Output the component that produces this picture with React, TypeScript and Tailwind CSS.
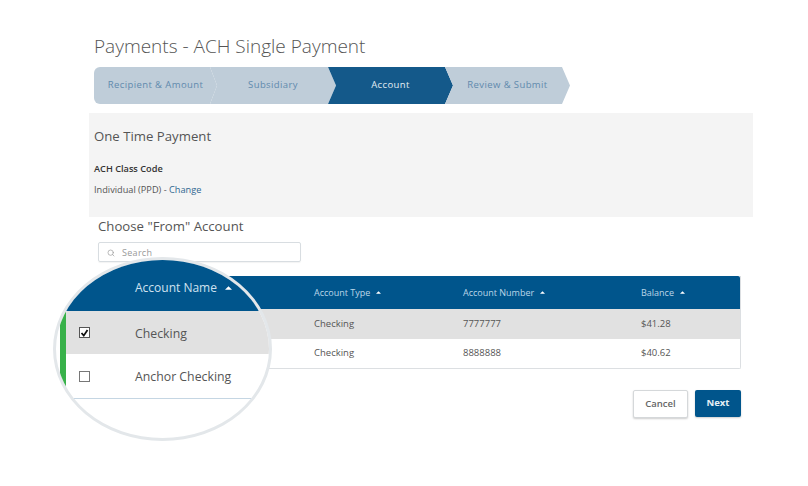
import { useState } from "react"
import { Search } from "lucide-react"

const steps = [
  { label: "Recipient & Amount", width: "w-[123px]", gap: "", clip: "[clip-path:polygon(0_0,116px_0,100%_50%,116px_100%,0_100%)] rounded-l-[6px]" },
  { label: "Subsidiary", width: "w-[126px]", gap: "-ml-[7px]", clip: "[clip-path:polygon(0_0,118px_0,100%_50%,118px_100%,0_100%,7px_50%)]" },
  { label: "Account", width: "w-[125px]", gap: "-ml-[8px]", clip: "[clip-path:polygon(0_0,117px_0,100%_50%,117px_100%,0_100%,8px_50%)]", active: true },
  { label: "Review & Submit", width: "w-[125px]", gap: "-ml-[8px]", clip: "[clip-path:polygon(0_0,117px_0,100%_50%,117px_100%,0_100%,8px_50%)]" },
]

const rows = [
  { type: "Checking", number: "7777777", balance: "$41.28", selected: true },
  { type: "Checking", number: "8888888", balance: "$40.62", selected: false },
]

function SortArrow({ className }: { className?: string }) {
  return (
    <svg viewBox="0 0 6 3" className={className} fill="currentColor">
      <polygon points="3,0 6,3 0,3" />
    </svg>
  )
}

function HeaderCell({ label }: { label: string }) {
  return (
    <div className="flex items-center gap-[6px]">
      <span>{label}</span>
      <SortArrow className="w-[5px] h-[3px] mt-[-1px] text-white" />
    </div>
  )
}

function Stepper() {
  return (
    <div className="flex h-[37px]">
      {steps.map((step) => (
        <div
          key={step.label}
          className={`${step.width} ${step.clip} ${step.gap} ${
            step.active ? "bg-[#14598a] text-[#e3edf4]" : "bg-[#bfcdd9] text-[#5f8aad]"
          } flex items-center justify-center text-[9.5px] tracking-[0.4px]`}
        >
          {step.label}
        </div>
      ))}
    </div>
  )
}

function Magnifier() {
  return (
    <div className="absolute left-[53px] top-[257px] w-[219px] h-[184px] rounded-[50%] border-[3px] border-[#e3e7ea] bg-white overflow-hidden">
      <div className="h-[51px] bg-[#00558c] ml-[7px] flex items-end pb-[14px] pl-[72px] text-[12px] text-[#cfe2f0]">
        <div className="flex items-center gap-[8px]">
          <span>Account Name</span>
          <SortArrow className="w-[7px] h-[4px] text-white" />
        </div>
      </div>
      <div className="flex">
        <div className="w-[6px] ml-[4px] h-[88px] bg-[#38b14a]" />
        <div className="flex-1">
          <div className="h-[43px] bg-[#e1e1e1] flex items-center pl-[13px] text-[12.3px] text-[#555]">
            <span className="w-[11px] h-[11px] border border-[#555] bg-white flex items-center justify-center">
              <svg viewBox="0 0 12 12" className="w-[10px] h-[10px]" fill="none" stroke="#111" strokeWidth="2.4">
                <path d="M2 6l3 3.5L10 2" />
              </svg>
            </span>
            <span className="ml-[45px] pt-[3px]">Checking</span>
          </div>
          <div className="h-[45px] border-b border-[#c5d6e3] flex items-center pl-[13px] text-[12.3px] text-[#555]">
            <span className="w-[11px] h-[11px] border border-[#777] bg-white" />
            <span className="ml-[45px] pt-[3px]">Anchor Checking</span>
          </div>
        </div>
      </div>
    </div>
  )
}

export default function App() {
  const [query, setQuery] = useState("")

  return (
    <div className="relative w-[808px] h-[486px] bg-white overflow-hidden font-['Open_Sans',sans-serif] text-[#555]">
      <div className="pt-[34px] pl-[94px]">
        <h1 className="h-[33px] text-[19px] leading-[25px] font-light text-[#555]">Payments - ACH Single Payment</h1>
        <Stepper />
      </div>

      <section className="ml-[89px] mt-[9px] w-[664px] h-[104px] bg-[#f4f4f4] pl-[5px] pt-[13px]">
        <h2 className="text-[13.2px] leading-[20px] text-[#555]">One Time Payment</h2>
        <div className="mt-[16px] text-[9.2px] leading-[14px] font-semibold text-[#333]">ACH Class Code</div>
        <div className="mt-[7px] text-[9.2px] leading-[14px] text-[#555]">
          Individual (PPD) - <a className="text-[#2f6791]">Change</a>
        </div>
      </section>

      <div className="pl-[98px]">
        <h2 className="text-[13.2px] leading-[18px] text-[#555]">Choose "From" Account</h2>
        <div className="mt-[7px] w-[203px] h-[20px] border border-[#d8dde1] rounded-[2px] flex items-center pl-[8px] gap-[7px] shadow-[0_1px_1px_rgba(0,0,0,0.05)]">
          <Search className="w-[8px] h-[8px] mt-[2px] text-[#999]" strokeWidth={2} />
          <input
            value={query}
            onChange={(e) => setQuery(e.target.value)}
            placeholder="Search"
            className="flex-1 min-w-0 pt-[2px] text-[9px] tracking-[0.3px] outline-none placeholder:text-[#999]"
          />
        </div>
      </div>

      <div className="ml-[98px] mt-[14px] w-[643px] border-b border-r border-[#dcdfe2] rounded-b-[2px]">
        <div className="h-[33px] grid grid-cols-[216px_149px_178px_1fr] items-center bg-[#00558c] rounded-t-[2px] text-[9px] text-[#bcd6e8]">
          <div />
          <HeaderCell label="Account Type" />
          <HeaderCell label="Account Number" />
          <HeaderCell label="Balance" />
        </div>
        {rows.map((row) => (
          <div
            key={row.number}
            className={`h-[29.5px] grid grid-cols-[216px_149px_178px_1fr] items-center text-[9.5px] text-[#555] ${
              row.selected ? "bg-[#e1e1e1]" : "bg-white"
            }`}
          >
            <div />
            <div>{row.type}</div>
            <div>{row.number}</div>
            <div>{row.balance}</div>
          </div>
        ))}
      </div>

      <div className="mt-[21px] ml-[633px] w-[108px] flex items-start gap-[7px] text-[9.5px]">
        <button className="w-[55px] h-[28px] bg-white border border-[#d5d8da] rounded-[2px] font-semibold text-[#666] shadow-[0_1px_2px_rgba(0,0,0,0.2)]">
          Cancel
        </button>
        <button className="w-[46px] h-[27px] bg-[#00558c] rounded-[2px] font-bold text-[#e6eff5] shadow-[0_1px_2px_rgba(0,0,0,0.2)]">
          Next
        </button>
      </div>

      <Magnifier />
    </div>
  )
}
